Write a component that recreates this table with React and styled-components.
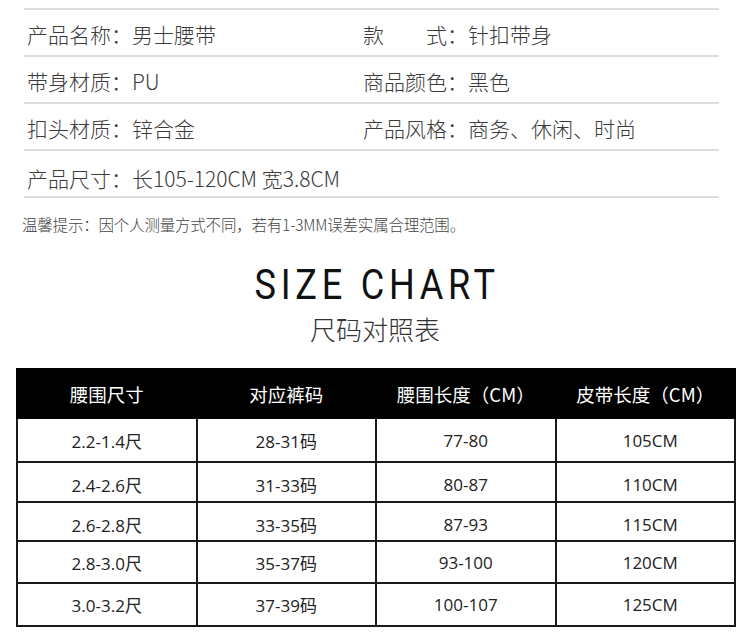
import React from "react";
import styled, { createGlobalStyle } from "styled-components";

const Global = createGlobalStyle`
  html, body { margin: 0; padding: 0; background: #fff; }
  body { font-family: "Noto Sans CJK SC", "Noto Sans", sans-serif; color: #333; }
`;

const Page = styled.div`
  width: 750px;
  height: 638px;
  overflow: hidden;
  background: #fff;
  padding-top: 8px;
  box-sizing: border-box;
`;

const InfoList = styled.div`
  margin: 0 31px 0 24px;
  border-top: 2px solid #dcdcdc;
`;

const InfoRow = styled.div`
  display: grid;
  grid-template-columns: 336px 1fr;
  height: 47px;
  box-sizing: border-box;
  padding: ${(p) => (p.$shift ? "10px" : "3px")} 0 0 3px;
  align-items: center;
  border-bottom: 2px solid #dcdcdc;
  font-size: 21px;
  font-weight: 300;
  color: #3a3a3a;
  line-height: 1;
  white-space: pre;
`;

const Note = styled.p`
  margin: 16px 0 0 22px;
  font-size: 15.5px;
  font-weight: 300;
  line-height: 20px;
  color: #444;
  letter-spacing: -0.2px;
`;

const Heading = styled.div`
  display: flex;
  flex-direction: column;
  align-items: center;
  margin-top: 29px;
`;

const Title = styled.h1`
  margin: 0;
  font-family: Roboto, "Liberation Sans", sans-serif;
  font-weight: 400;
  font-size: 42px;
  line-height: 44px;
  letter-spacing: 5.5px;
  padding-left: 5px;
  color: #111;
  transform: scaleX(0.86);
`;

const Subtitle = styled.h2`
  margin: 3px 0 0;
  font-weight: 300;
  font-size: 26px;
  line-height: 38px;
  color: #333;
  letter-spacing: 0;
`;

const Table = styled.table`
  margin: 20px 0 0 16px;
  width: 720px;
  border-collapse: collapse;
  table-layout: fixed;
  font-family: "Open Sans", "Noto Sans CJK SC", sans-serif;
`;

const HeadCell = styled.th`
  height: 47px;
  padding: 0;
  background: #000;
  color: #fff;
  font-family: "Noto Sans CJK SC", sans-serif;
  font-weight: 400;
  font-size: 18.5px;
  text-align: center;
  border: 2px solid #000;
`;

const Cell = styled.td`
  height: ${(p) => p.$h}px;
  padding: ${(p) => p.$pt || 0}px 0 0 ${(p) => p.$pl || 0}px;
  box-sizing: border-box;
  text-align: center;
  font-size: 17px;
  color: #222;
  border: 2px solid #1a1a1a;
`;

const headers = ["腰围尺寸", "对应裤码", "腰围长度（CM）", "皮带长度（CM）"];
const rows = [
  { h: 44, pt: 0, cells: ["2.2-1.4尺", "28-31码", "77-80", "105CM"] },
  { h: 40, pt: 4, cells: ["2.4-2.6尺", "31-33码", "80-87", "110CM"] },
  { h: 39, pt: 6, cells: ["2.6-2.8尺", "33-35码", "87-93", "115CM"] },
  { h: 42, pt: 1, cells: ["2.8-3.0尺", "35-37码", "93-100", "120CM"] },
  { h: 43, pt: 0, cells: ["3.0-3.2尺", "37-39码", "100-107", "125CM"] },
];

export default function App() {
  return (
    <Page>
      <Global />
      <InfoList>
        <InfoRow>
          <span>产品名称：男士腰带</span>
          <span>款　　式：针扣带身</span>
        </InfoRow>
        <InfoRow>
          <span>带身材质：PU</span>
          <span>商品颜色：黑色</span>
        </InfoRow>
        <InfoRow>
          <span>扣头材质：锌合金</span>
          <span>产品风格：商务、休闲、时尚</span>
        </InfoRow>
        <InfoRow $shift>
          <span>产品尺寸：长105-120CM 宽3.8CM</span>
          <span />
        </InfoRow>
      </InfoList>
      <Note>温馨提示：因个人测量方式不同，若有1-3MM误差实属合理范围。</Note>
      <Heading>
        <Title>SIZE CHART</Title>
        <Subtitle>尺码对照表</Subtitle>
      </Heading>
      <Table>
        <thead>
          <tr>
            {headers.map((h) => (
              <HeadCell key={h}>{h}</HeadCell>
            ))}
          </tr>
        </thead>
        <tbody>
          {rows.map((r, i) => (
            <tr key={i}>
              {r.cells.map((c, j) => (
                <Cell key={j} $h={r.h} $pt={r.pt} $pl={j === 3 ? 10 : 0}>
                  {c}
                </Cell>
              ))}
            </tr>
          ))}
        </tbody>
      </Table>
    </Page>
  );
}
